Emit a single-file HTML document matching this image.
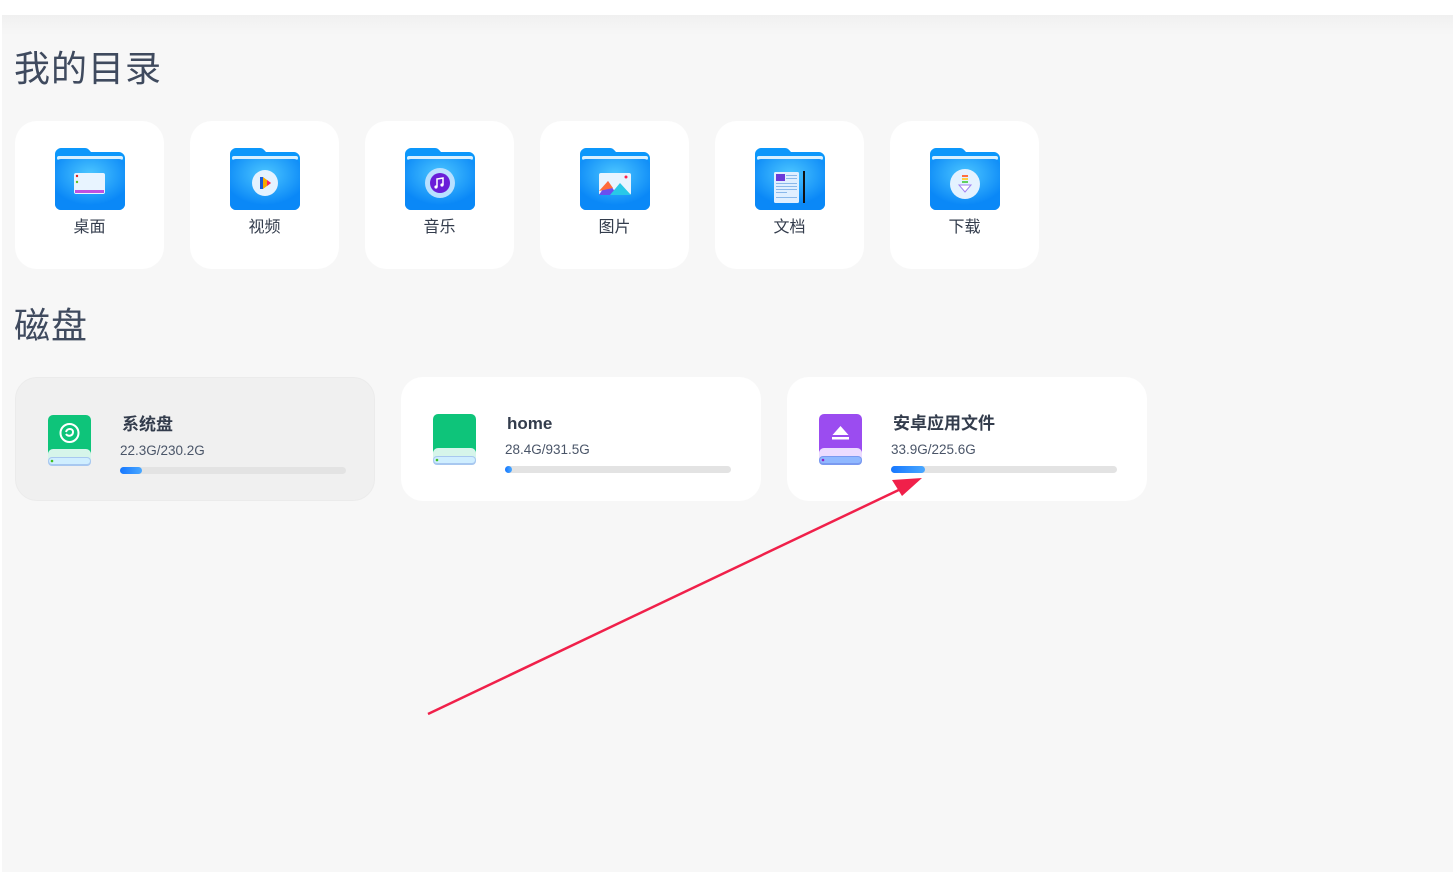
<!DOCTYPE html>
<html><head><meta charset="utf-8"><style>
*{margin:0;padding:0;box-sizing:border-box}
body{width:1453px;height:872px;background:#fff;font-family:"Liberation Sans","Noto Sans CJK SC",sans-serif;position:relative;overflow:hidden}
.main{position:absolute;left:2px;top:15px;width:1451px;height:857px;background:#f7f7f7}
.main:before{content:"";position:absolute;left:0;top:0;right:0;height:20px;background:linear-gradient(#f0f0f0,#f7f7f7)}
h1{position:absolute;left:14px;font-weight:400;font-size:36px;line-height:50px;color:#3f4a5e;letter-spacing:1px}
.card{position:absolute;top:121px;width:149px;height:148px;background:#fff;border-radius:22px}
.card svg{position:absolute;left:40px;top:27px}
.card span{position:absolute;left:0;right:0;top:95px;line-height:24px;text-align:center;font-size:16px;color:#333c4c}
.disk{position:absolute;top:377px;width:360px;height:124px;background:#fff;border-radius:22px}
.disk.sel{background:#f0f0f0;border:1px solid #ebebeb}
.disk svg{position:absolute;left:31px;top:37px}
.disk b{position:absolute;left:106px;top:35px;line-height:24px;font-size:17px;color:#333c4c}
.disk i{position:absolute;left:104px;top:63px;line-height:20px;font-style:normal;font-size:13.5px;color:#4a5568}
.bar{position:absolute;left:104px;top:89px;width:226px;height:7px;border-radius:4px;background:#e3e3e3}
.bar div{height:7px;border-radius:4px;background:linear-gradient(90deg,#1677ff,#4aa8ff)}
</style></head><body>
<div class="main"></div>
<h1 style="top:44px">我的目录</h1>
<h1 style="top:301px">磁盘</h1>

<svg width="0" height="0" style="position:absolute"><defs>
<radialGradient id="fr" cx="0.5" cy="0.3" r="0.6"><stop offset="0" stop-color="#4cc6ff"/><stop offset="1" stop-color="#0a88f7"/></radialGradient>
</defs></svg>

<div class="card" style="left:15px"><svg width="70" height="62" viewBox="0 0 70 62"><path d="M6 0h24c3 0 4 2 6 4h28c3 0 6 3 6 6v46c0 3-3 6-6 6H6c-3 0-6-3-6-6V6c0-3 3-6 6-6z" fill="#0c97fb"/><rect x="2" y="8" width="66" height="4" rx="2" fill="#d8f0ff"/><rect x="0" y="11" width="70" height="51" rx="6" fill="url(#fr)"/><rect x="19" y="25" width="31" height="21" rx="2" fill="#e8f4ff"/><circle cx="22" cy="28" r="1.2" fill="#e02020"/><circle cx="22" cy="34" r="1.2" fill="#60c020"/><rect x="20" y="42" width="29" height="3" fill="#c050e0"/></svg><span>桌面</span></div>
<div class="card" style="left:190px"><svg width="70" height="62" viewBox="0 0 70 62"><path d="M6 0h24c3 0 4 2 6 4h28c3 0 6 3 6 6v46c0 3-3 6-6 6H6c-3 0-6-3-6-6V6c0-3 3-6 6-6z" fill="#0c97fb"/><rect x="2" y="8" width="66" height="4" rx="2" fill="#d8f0ff"/><rect x="0" y="11" width="70" height="51" rx="6" fill="url(#fr)"/><circle cx="35" cy="35" r="13" fill="#e4f2ff"/><rect x="30" y="29" width="3" height="12" fill="#1a5ad8"/><path d="M33 29l8 6-8 6z" fill="#f7a800"/><path d="M37 32l4 3-4 3z" fill="#ff2060"/></svg><span>视频</span></div>
<div class="card" style="left:365px"><svg width="70" height="62" viewBox="0 0 70 62"><path d="M6 0h24c3 0 4 2 6 4h28c3 0 6 3 6 6v46c0 3-3 6-6 6H6c-3 0-6-3-6-6V6c0-3 3-6 6-6z" fill="#0c97fb"/><rect x="2" y="8" width="66" height="4" rx="2" fill="#d8f0ff"/><rect x="0" y="11" width="70" height="51" rx="6" fill="url(#fr)"/><circle cx="35" cy="35" r="15" fill="#b9e0ff"/><circle cx="35" cy="35" r="10" fill="#6a1ed8"/><path d="M32 39v-8l6-1v7" stroke="#fff" stroke-width="1.5" fill="none"/><circle cx="31" cy="39" r="1.6" fill="#fff"/><circle cx="37" cy="37" r="1.6" fill="#fff"/></svg><span>音乐</span></div>
<div class="card" style="left:540px"><svg width="70" height="62" viewBox="0 0 70 62"><path d="M6 0h24c3 0 4 2 6 4h28c3 0 6 3 6 6v46c0 3-3 6-6 6H6c-3 0-6-3-6-6V6c0-3 3-6 6-6z" fill="#0c97fb"/><rect x="2" y="8" width="66" height="4" rx="2" fill="#d8f0ff"/><rect x="0" y="11" width="70" height="51" rx="6" fill="url(#fr)"/><rect x="19" y="25" width="32" height="22" rx="2" fill="#e8f4ff"/><path d="M19 47l9-14 9 14z" fill="#6a4ef0"/><path d="M19 43l9-10 5 7z" fill="#ff6a3a"/><path d="M30 47l10-12 11 12z" fill="#28c8e8"/><circle cx="46" cy="29" r="1.5" fill="#ff2050"/></svg><span>图片</span></div>
<div class="card" style="left:715px"><svg width="70" height="62" viewBox="0 0 70 62"><path d="M6 0h24c3 0 4 2 6 4h28c3 0 6 3 6 6v46c0 3-3 6-6 6H6c-3 0-6-3-6-6V6c0-3 3-6 6-6z" fill="#0c97fb"/><rect x="2" y="8" width="66" height="4" rx="2" fill="#d8f0ff"/><rect x="0" y="11" width="70" height="51" rx="6" fill="url(#fr)"/><rect x="19" y="24" width="25" height="31" rx="1.5" fill="#e0efff"/><rect x="21" y="26" width="9" height="7" fill="#6a3ad8"/><g fill="#8ab8ea"><rect x="31" y="27" width="11" height="1"/><rect x="31" y="30" width="11" height="1"/><rect x="21" y="35" width="21" height="1"/><rect x="21" y="38" width="21" height="1"/><rect x="21" y="41" width="21" height="1"/><rect x="21" y="44" width="11" height="1"/><rect x="21" y="49" width="21" height="1"/></g><rect x="48" y="23" width="2" height="32" fill="#111"/></svg><span>文档</span></div>
<div class="card" style="left:890px"><svg width="70" height="62" viewBox="0 0 70 62"><path d="M6 0h24c3 0 4 2 6 4h28c3 0 6 3 6 6v46c0 3-3 6-6 6H6c-3 0-6-3-6-6V6c0-3 3-6 6-6z" fill="#0c97fb"/><rect x="2" y="8" width="66" height="4" rx="2" fill="#d8f0ff"/><rect x="0" y="11" width="70" height="51" rx="6" fill="url(#fr)"/><circle cx="35" cy="36" r="15" fill="#e4f2ff"/><rect x="32" y="27" width="6" height="2" fill="#ff7040"/><rect x="32" y="30" width="6" height="2" fill="#ffd040"/><rect x="32" y="33" width="6" height="2" fill="#60d060"/><path d="M29 37h12l-6 7z" fill="#fff" stroke="#a080f0"/></svg><span>下载</span></div>

<div class="disk sel" style="left:15px"><svg width="45" height="52" viewBox="0 0 45 52"><rect x="1" y="0" width="43" height="42" rx="5" fill="#0ec47a"/><rect x="1" y="34" width="43" height="17" rx="5" fill="#d6f5ea"/><rect x="1" y="42" width="43" height="9" rx="4" fill="#a8c8f0"/><rect x="2" y="43" width="41" height="6" rx="3" fill="#cfeeff"/><circle cx="5" cy="46" r="1.3" fill="#40c020"/><circle cx="22.5" cy="18" r="9" fill="none" stroke="#fff" stroke-width="2"/><path d="M19 17c1-4 7-4 7 0s-5 5-7 2" stroke="#fff" stroke-width="2" fill="none"/></svg><b>系统盘</b><i>22.3G/230.2G</i><div class="bar"><div style="width:22px"></div></div></div>
<div class="disk" style="left:401px"><svg width="45" height="52" viewBox="0 0 45 52"><rect x="1" y="0" width="43" height="42" rx="5" fill="#0ec47a"/><rect x="1" y="34" width="43" height="17" rx="5" fill="#d6f5ea"/><rect x="1" y="42" width="43" height="9" rx="4" fill="#a8c8f0"/><rect x="2" y="43" width="41" height="6" rx="3" fill="#cfeeff"/><circle cx="5" cy="46" r="1.3" fill="#40c020"/></svg><b>home</b><i>28.4G/931.5G</i><div class="bar"><div style="width:7px"></div></div></div>
<div class="disk" style="left:787px"><svg width="45" height="52" viewBox="0 0 45 52"><rect x="1" y="0" width="43" height="42" rx="5" fill="#9b4cf0"/><rect x="1" y="34" width="43" height="17" rx="5" fill="#ecdcff"/><rect x="1" y="42" width="43" height="9" rx="4" fill="#7a9af0"/><rect x="2" y="43" width="41" height="6" rx="3" fill="#90b8ff"/><circle cx="5" cy="46" r="1.3" fill="#9020c0"/><path d="M22.5 12l8 9h-16z" fill="#fff"/><rect x="14" y="23" width="17" height="2.5" fill="#fff"/></svg><b>安卓应用文件</b><i>33.9G/225.6G</i><div class="bar"><div style="width:34px"></div></div></div>

<svg style="position:absolute;left:0;top:0" width="1453" height="872"><line x1="428" y1="714" x2="905" y2="487" stroke="#f0204a" stroke-width="2.5"/><path d="M922 478l-30 2 10 16z" fill="#f0204a"/></svg>
</body></html>
